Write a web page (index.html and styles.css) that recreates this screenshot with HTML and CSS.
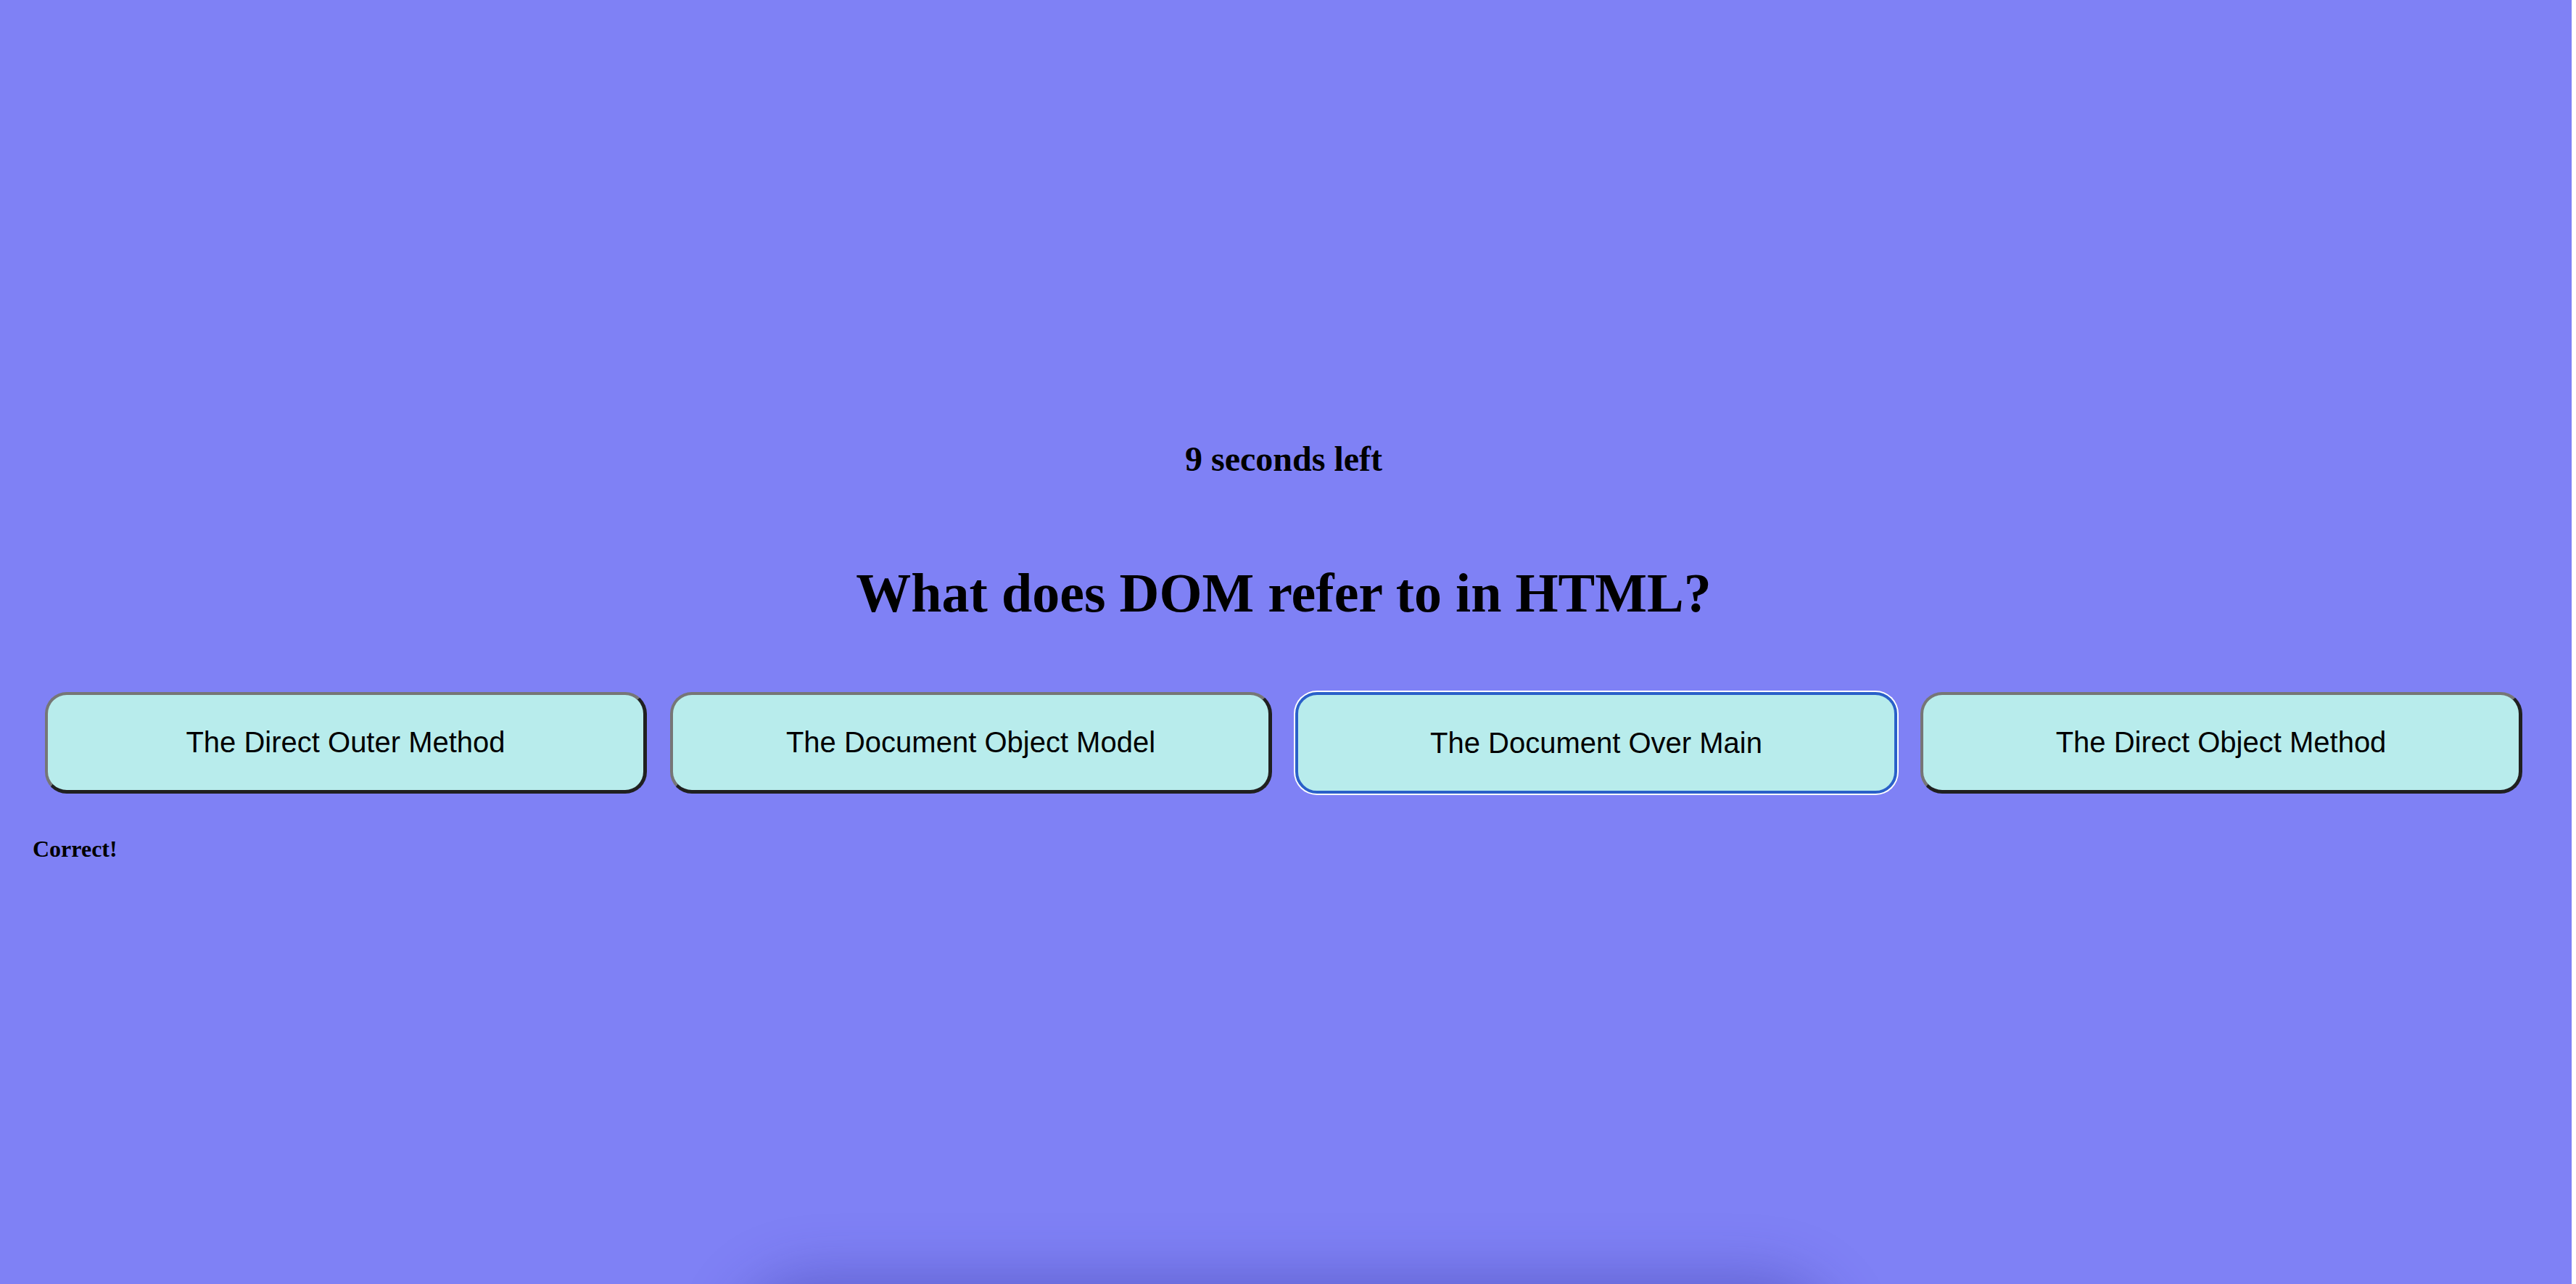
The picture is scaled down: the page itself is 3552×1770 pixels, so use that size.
FILE: index.html
```html
<!DOCTYPE html>
<html lang="en">
<head>
<meta charset="utf-8">
<title>Quiz</title>
<link rel="stylesheet" href="styles.css">
</head>
<body>
<div class="page">
  <main class="quiz">
    <h2 class="timer">9 seconds left</h2>
    <h1 class="question">What does DOM refer to in HTML?</h1>
    <div class="answers">
      <button class="answer">The Direct Outer Method</button>
      <button class="answer">The Document Object Model</button>
      <button class="answer focused">The Document Over Main</button>
      <button class="answer">The Direct Object Method</button>
    </div>
    <p class="result">Correct!</p>
  </main>
  <div class="shade"></div>
</div>
</body>
</html>
```

FILE: styles.css
```css
html {
  background: #ffffff;
}
body {
  margin: 0;
  font-family: "Liberation Serif", "Times New Roman", serif;
  overflow: hidden;
}
.page {
  position: relative;
  width: calc(100vw - 6px);
  height: 100vh;
  background: #7f81f5;
  overflow: hidden;
}
.quiz {
  display: flex;
  flex-direction: column;
  padding: 605px 45px 0 45px;
}
.timer {
  margin: 0 6px 0 0;
  text-align: center;
  font-size: 48px;
  font-weight: bold;
  line-height: 55px;
  color: #000;
}
.question {
  margin: 114px 6px 0 0;
  text-align: center;
  font-size: 76px;
  font-weight: bold;
  line-height: 87px;
  color: #000;
}
.answers {
  display: grid;
  grid-template-columns: repeat(4, 1fr);
  gap: 32px;
  margin: 93px 23px 0 17px;
}
.answer {
  height: 140px;
  background: #b8ecec;
  border-style: solid;
  border-width: 4px 5px 5px 4px;
  border-color: #767676 #202020 #202020 #767676;
  border-radius: 30px;
  font-family: "Liberation Sans", Arial, sans-serif;
  font-size: 40px;
  color: #000;
  padding: 0;
}
.answer.focused {
  border: 4px solid #2a60c9;
  box-shadow: 0 0 0 2px #ffffff;
}
.result {
  margin: 58px 0 0 0;
  font-size: 32px;
  font-weight: bold;
  line-height: 37px;
  color: #000;
}
.shade {
  position: absolute;
  left: 50%;
  top: 100%;
  width: 1500px;
  height: 200px;
  margin-left: -750px;
  border-radius: 100px;
  box-shadow: 0 0 80px 10px rgba(40, 40, 140, 0.35);
}
```
